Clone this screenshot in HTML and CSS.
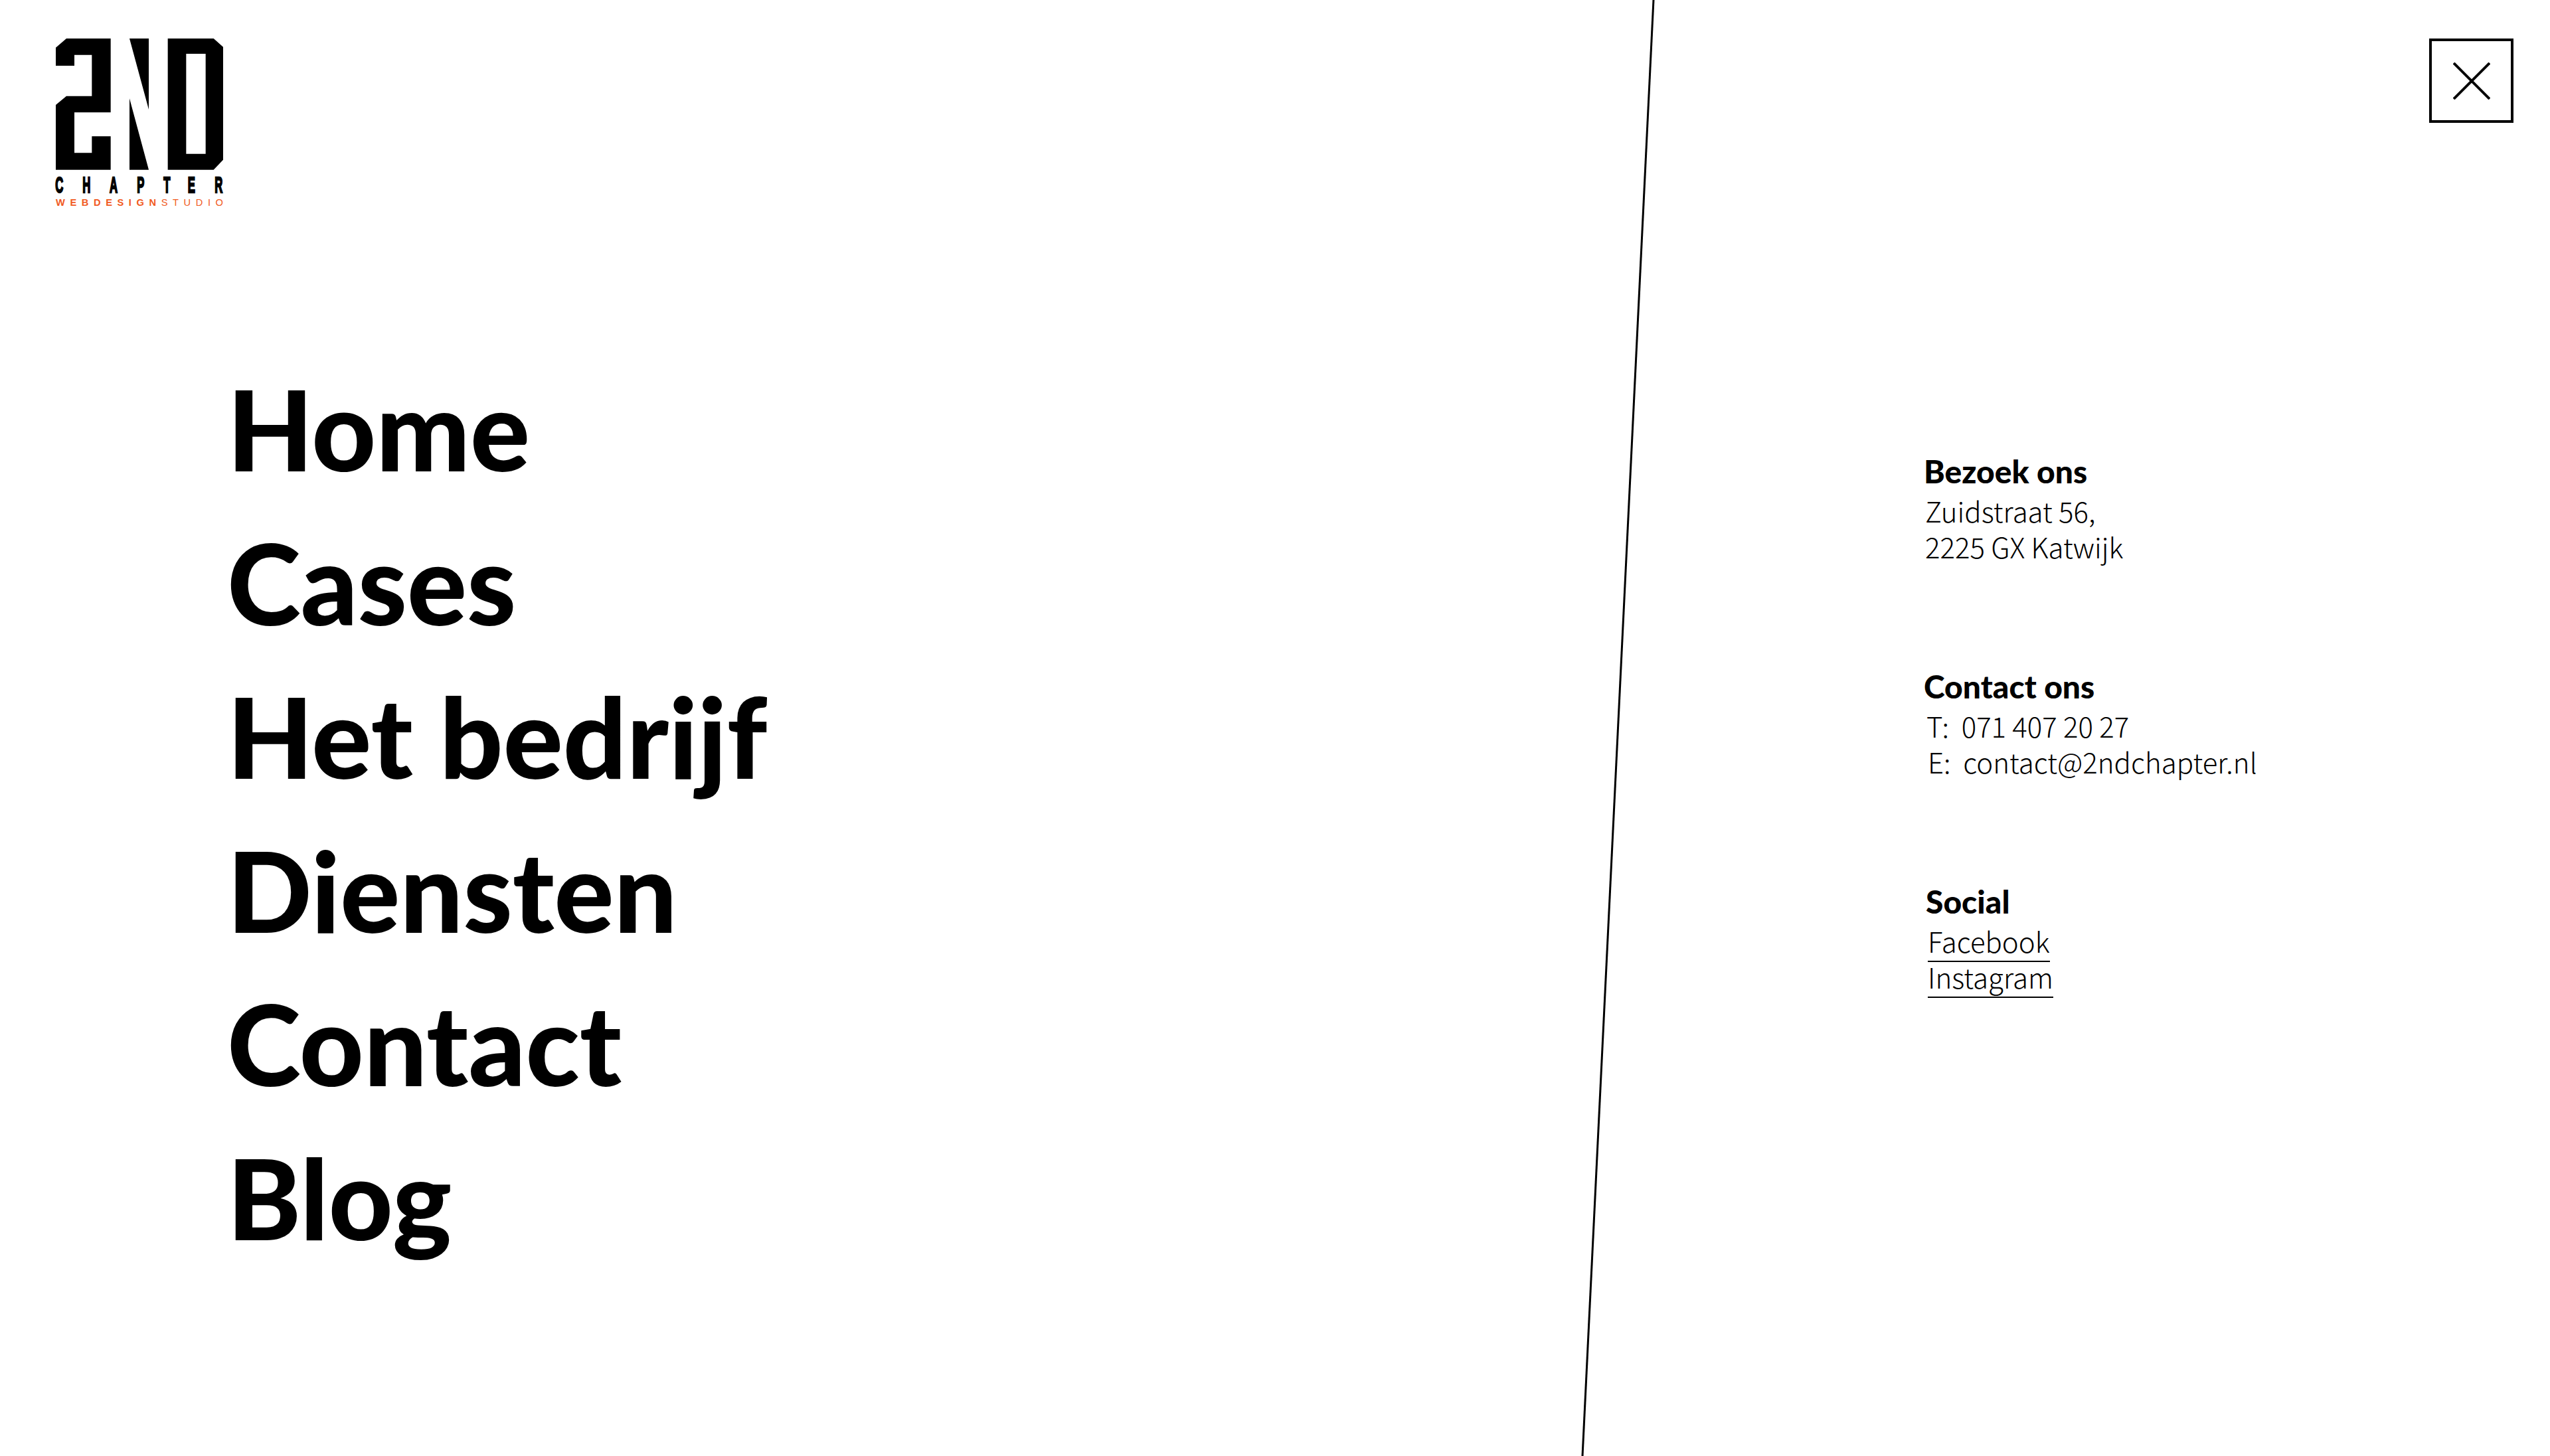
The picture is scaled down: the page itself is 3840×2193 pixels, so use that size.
FILE: index.html
```html
<!DOCTYPE html>
<html lang="nl">

<head>
  <meta charset="UTF-8" />
  <title>2ND Chapter</title>
  <link rel="stylesheet" href="styles.css">
</head>

<body>
  <!--schuine lijn-->
  <svg class="slant" width="3840" height="2193" viewBox="0 0 3840 2193">
    <line x1="2490" y1="0" x2="2383" y2="2193" stroke="#000" stroke-width="3" />
  </svg>

  <header class="top">
    <a class="logo" href="#">
      <svg width="320" height="300" viewBox="0 0 960 900">
        <path d="M102 125L150 84H350V418H186V601H265V526H350V677H102V384L150 344H265V158H186V207H102Z" />
        <path d="M435 84H522V405ZM435 355L522 677H435Z" />
        <path fill-rule="evenodd" d="M608 84H815L858 122V632L815 677H608ZM691 153V605H779V153Z" />
        <text class="logo-name" transform="scale(.5 1)" x="200 446 690 938 1178 1396 1640" y="779">CHAPTER</text>
        <text class="logo-sub" x="102" y="839" textLength="756" lengthAdjust="spacing"><tspan class="logo-heavy">WEBDESIGN</tspan>STUDIO</text>
      </svg>
    </a>
    <a class="close" href="#">
      <svg width="56" height="56" viewBox="0 0 56 56">
        <path d="M1 1L55 55M55 1L1 55" stroke="#000" stroke-width="4" />
      </svg>
    </a>
  </header>

  <main class="menu">
    <ul class="nav">
      <li><a href="#">Home</a></li>
      <li><a href="#">Cases</a></li>
      <li><a href="#">Het bedrijf</a></li>
      <li><a href="#">Diensten</a></li>
      <li><a href="#">Contact</a></li>
      <li><a href="#">Blog</a></li>
    </ul>

    <div class="info">
      <section class="block">
        <h4>Bezoek ons</h4>
        <p>Zuidstraat 56,</p>
        <p>2225 GX Katwijk</p>
      </section>
      <section class="block">
        <h4>Contact ons</h4>
        <p class="tel">T:&nbsp; 071 407 20 27</p>
        <p class="mail">E:&nbsp; contact@2ndchapter.nl</p>
      </section>
      <section class="block">
        <h4 class="social">Social</h4>
        <p class="links"><a href="#">Facebook</a></p>
        <p class="links"><a href="#">Instagram</a></p>
      </section>
    </div>
  </main>
</body>

</html>
```

FILE: styles.css
```css
* {
  padding: 0;
  margin: 0;
  list-style: none;
  border: 0;
  box-sizing: border-box;
}

body {
  width: 3840px;
  height: 2193px;
  background: #fff;
  color: #000;
  font-family: "Noto Sans CJK SC", sans-serif;
  overflow: hidden;
  position: relative;
}

a {
  color: #000;
  text-decoration: none;
}

.slant {
  position: absolute;
  left: 0;
  top: 0;
}

.top {
  display: flex;
  justify-content: space-between;
  align-items: flex-start;
  padding: 30px 55px 0 50px;
}

.logo {
  display: block;
  height: 300px;
}

.logo svg {
  display: block;
}

.logo-name {
  font-family: "Liberation Sans", sans-serif;
  font-weight: 700;
  font-size: 100px;
  stroke: #000;
  stroke-width: 7px;
}

.logo-sub {
  font-family: "Liberation Sans", sans-serif;
  font-size: 44px;
  fill: #f15a22;
}

.logo-heavy {
  font-weight: 700;
}

.close {
  display: flex;
  align-items: center;
  justify-content: center;
  width: 127px;
  height: 127px;
  margin-top: 28px;
  border: 4px solid #000;
}

.menu {
  display: flex;
  justify-content: space-between;
  padding: 200px 0 0 342px;
}

.nav li {
  height: 231.6px;
  line-height: 231.6px;
  font-family: Lato, sans-serif;
  font-size: 168px;
  font-weight: 900;
}

.info {
  width: 941px;
  padding-top: 153px;
}

.block {
  height: 324px;
}

.block h4 {
  font-family: Lato, sans-serif;
  font-size: 48px;
  line-height: 54px;
  font-weight: 900;
  margin: 0 0 5px -2px;
}

.block p {
  font-size: 42px;
  line-height: 54px;
  font-weight: 300;
}

.tel {
  padding-left: 2px;
}

.mail {
  padding-left: 4px;
}

.block .social {
  margin-left: 1px;
}

.links {
  padding-left: 4px;
}

.links a {
  border-bottom: 2px solid #000;
}
```
